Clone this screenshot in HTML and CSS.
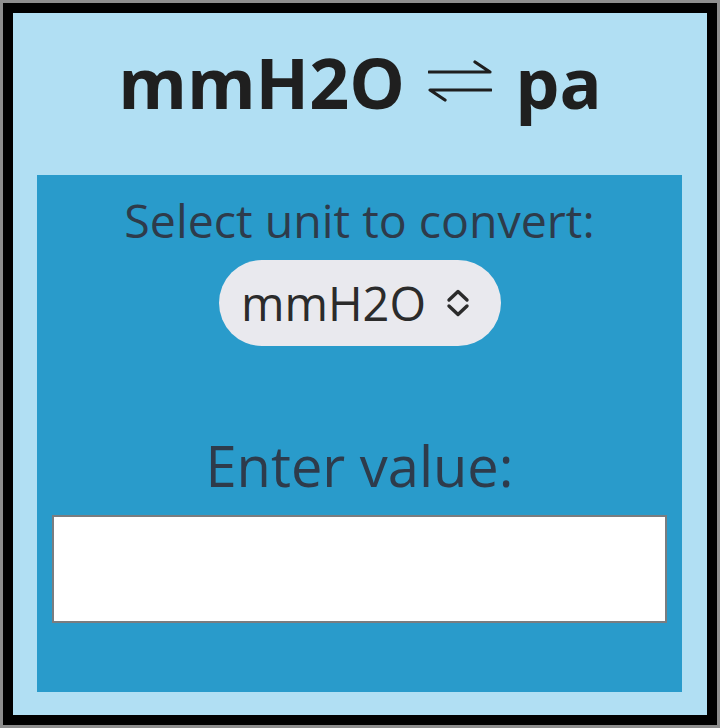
FILE: index.html
```html
<!DOCTYPE html>
<html>
<head>
<meta charset="utf-8">
<link rel="stylesheet" href="styles.css">
</head>
<body>
<div class="frame">
  <h1 class="title">mmH2O <svg class="arrows" role="img" aria-label="⇌" width="64" height="42" viewBox="0 0 64 42"><path d="M1 12 H62 L47 2 M63 30 H2 L17 40" fill="none" stroke="#1f1f1f" stroke-width="3.2" stroke-linecap="round" stroke-linejoin="round"/></svg> pa</h1>
  <div class="panel">
    <p class="label-select">Select unit to convert:</p>
    <div class="select-wrap">
      <div class="select">
        <span class="select-text">mmH2O</span>
        <svg class="chev" width="24" height="28" viewBox="0 0 24 28"><path d="M3 11 L12 2.5 L21 11 M3 17 L12 25.5 L21 17" fill="none" stroke="#2b2b2b" stroke-width="3.4" stroke-linecap="round" stroke-linejoin="round"/></svg>
      </div>
    </div>
    <p class="label-value">Enter value:</p>
    <input class="value-input" type="text">
  </div>
</div>
</body>
</html>
```

FILE: styles.css
```css
html, body {
  margin: 0;
  padding: 0;
  background: #8d8d8d;
}
body {
  padding: 3px;
  height: 728px;
  box-sizing: border-box;
  font-family: "Open Sans", "Noto Sans", sans-serif;
}
.frame {
  height: 722px;
  box-sizing: border-box;
  border: 10px solid #000;
  background: #b1dff3;
  display: flex;
  flex-direction: column;
}
.title {
  margin: 0;
  height: 162px;
  box-sizing: border-box;
  padding-top: 26px;
  text-align: center;
  font-size: 70px;
  font-weight: 700;
  color: #1f1f1f;
  line-height: 86px;
  white-space: nowrap;
}
.arrows {
  vertical-align: 7px;
  margin: 0 5px;
}
.panel {
  margin: 0 25px 23px 24px;
  flex: 1;
  background: #299bcb;
  display: flex;
  flex-direction: column;
  align-items: center;
  padding: 0 15px;
}
.label-select {
  margin: 17px 0 0;
  font-size: 46.5px;
  line-height: 56px;
  color: #2e3b4b;
  white-space: nowrap;
}
.select-wrap {
  margin-top: 12px;
}
.select {
  width: 282px;
  height: 86px;
  box-sizing: border-box;
  border-radius: 43px;
  background: #e9e9ee;
  display: flex;
  align-items: center;
  justify-content: center;
  gap: 20px;
  padding-right: 8px;
}
.select-text {
  font-size: 47px;
  color: #2b2b2b;
}
.chev {
  flex-shrink: 0;
  display: block;
}
.label-value {
  margin: 84px 0 0;
  font-size: 56px;
  line-height: 70px;
  color: #2e3b4b;
}
.value-input {
  margin-top: 15px;
  width: 100%;
  height: 108px;
  box-sizing: border-box;
  border: 2px solid #7a7d80;
  background: #fff;
  padding: 0;
}
```
